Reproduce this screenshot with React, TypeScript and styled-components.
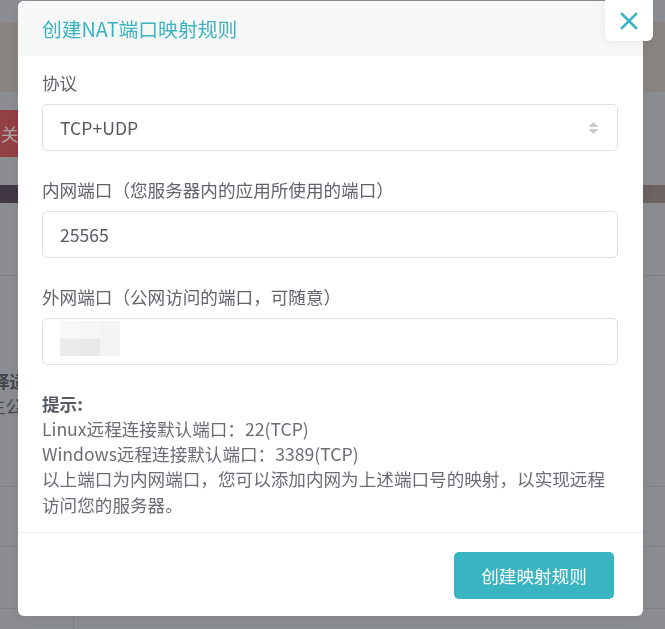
import React from "react";
import styled, { createGlobalStyle } from "styled-components";

const GlobalStyle = createGlobalStyle`
  html, body {
    margin: 0;
    padding: 0;
    overflow: hidden;
  }
  body {
    font-family: "Noto Sans CJK SC", "Noto Sans", sans-serif;
    background: #c7cbd1;
  }
  * { box-sizing: border-box; }
`;

/* ---------- page underneath the dialog ---------- */

const Page = styled.div`
  width: 665px;
  height: 629px;
  display: flex;
  flex-direction: column;
  background: #c7cbd1;
  overflow: hidden;
`;

const Band = styled.div<{ $h: number; $bg?: string }>`
  height: ${(p) => p.$h}px;
  flex: none;
  background: ${(p) => p.$bg ?? "transparent"};
`;

const ActionRow = styled.div`
  height: 47px;
  flex: none;
  display: flex;
  align-items: stretch;
`;

const PowerButton = styled.div`
  margin-left: -21px;
  padding: 0 22px;
  display: flex;
  align-items: center;
  background: #d35c61;
  color: #f6eaea;
  font-size: 17.6px;
  border-radius: 4px;
`;

const DarkBand = styled.div`
  height: 18px;
  flex: none;
  background: linear-gradient(90deg, #5e4e60 0%, #8c7a7c 60%, #9d908d 100%);
`;

const Section = styled.div<{ $h: number }>`
  height: ${(p) => p.$h}px;
  flex: none;
  border-bottom: 1px solid #b5b9bf;
`;

const Intro = styled.div`
  height: 211px;
  flex: none;
  padding-top: 92px;
  border-bottom: 1px solid #b5b9bf;
  font-size: 17.6px;
  line-height: 25px;
  white-space: nowrap;
`;

const IntroTitle = styled.div`
  margin-left: -8px;
  font-weight: 700;
  color: #5f636d;
`;

const IntroText = styled.div`
  margin-left: -12px;
  color: #646873;
`;

const BottomRow = styled.div`
  flex: 1;
  display: flex;
`;

const SideCell = styled.div`
  width: 74px;
  border-right: 1px solid #b5b9bf;
`;

const Mask = styled.div`
  position: fixed;
  inset: 0;
  background: rgba(0, 0, 0, 0.3);
`;

/* ---------- dialog ---------- */

const Dialog = styled.div`
  position: fixed;
  left: 18px;
  top: 1px;
  width: 625px;
  background: #ffffff;
  border-radius: 6px;
  box-shadow: 0 4px 18px rgba(0, 0, 0, 0.08);
  display: flex;
  flex-direction: column;
`;

const Header = styled.div`
  height: 55px;
  padding: 0 24px;
  display: flex;
  align-items: center;
  background: #f6f7f7;
  border-radius: 6px 6px 0 0;
`;

const Title = styled.h3`
  margin: 0;
  font-size: 19.8px;
  font-weight: 400;
  line-height: 26px;
  color: #3cb4c0;
`;

const CloseButton = styled.button`
  position: absolute;
  top: -8px;
  right: -10px;
  width: 48px;
  height: 48px;
  padding: 0;
  padding-top: 8px;
  border: none;
  border-radius: 6px;
  background: #ffffff;
  box-shadow: 0 2px 10px rgba(0, 0, 0, 0.06);
  display: flex;
  align-items: center;
  justify-content: center;
  cursor: pointer;
`;

const Body = styled.div`
  padding: 14px 25px 14px 24px;
  display: flex;
  flex-direction: column;
  gap: 26px;
`;

const Field = styled.div`
  display: flex;
  flex-direction: column;
  gap: 9px;
`;

const Label = styled.label`
  font-size: 17.6px;
  line-height: 25px;
  color: #62636b;
`;

const Control = styled.div`
  height: 47px;
  border: 1px solid #dcdfe3;
  border-radius: 5px;
  padding: 0 18px 0 17px;
  display: flex;
  align-items: center;
  justify-content: space-between;
  font-size: 17.6px;
  color: #575862;
  background: #ffffff;
`;

const TextInput = styled.input`
  height: 47px;
  border: 1px solid #dcdfe3;
  border-radius: 5px;
  padding: 0 17px;
  font-family: inherit;
  font-size: 17.6px;
  color: #575862;
  background: #ffffff;
  outline: none;
`;

const RedactedBox = styled.div`
  height: 47px;
  border: 1px solid #dcdfe3;
  border-radius: 5px;
  padding: 2px 17px 0;
  display: flex;
  align-items: flex-start;
`;

const Mosaic = styled.div`
  display: grid;
  grid-template-columns: 20px 20px 20px;
  grid-template-rows: 18px 17px;
  filter: blur(0.6px);
`;

const Tile = styled.span<{ $c: string; $col: string; $row: string }>`
  background: ${(p) => p.$c};
  grid-column: ${(p) => p.$col};
  grid-row: ${(p) => p.$row};
`;

const Tips = styled.div`
  font-size: 17.6px;
  line-height: 25px;
  color: #6b6c75;
`;

const TipTitle = styled.div`
  font-weight: 700;
  color: #585a65;
`;

const TipPara = styled.p`
  margin: 0;
  line-height: 26px;
`;

const Footer = styled.div`
  border-top: 1px solid #eeeeee;
  padding: 19px 29px 17px;
  display: flex;
  justify-content: flex-end;
`;

const PrimaryButton = styled.button`
  width: 160px;
  height: 47px;
  border: none;
  border-radius: 5px;
  background: #39b5c1;
  color: #ffffff;
  font-family: inherit;
  font-size: 17.6px;
  cursor: pointer;
`;

const SortArrows = () => (
  <svg width="11" height="14" viewBox="0 0 11 14" aria-hidden>
    <path d="M5.5 1 L10.5 6 L0.5 6 Z" fill="#cacaca" />
    <path d="M5.5 13 L10.5 8 L0.5 8 Z" fill="#cacaca" />
  </svg>
);

const CloseIcon = () => (
  <svg width="18" height="18" viewBox="0 0 18 18" aria-hidden>
    <path
      d="M2 2 L16 16 M16 2 L2 16"
      stroke="#3ab4c0"
      strokeWidth="2.6"
      strokeLinecap="square"
      fill="none"
    />
  </svg>
);

export default function App() {
  return (
    <>
      <GlobalStyle />
      <Page>
        <Band $h={22} />
        <Band $h={70} $bg="#c5beb8" />
        <Band $h={18} />
        <ActionRow>
          <PowerButton>关机</PowerButton>
        </ActionRow>
        <Band $h={28} />
        <DarkBand />
        <Section $h={73} />
        <Intro>
          <IntroTitle>择适</IntroTitle>
          <IntroText>主公</IntroText>
        </Intro>
        <Section $h={60} />
        <Section $h={62} />
        <BottomRow>
          <SideCell />
        </BottomRow>
      </Page>
      <Mask />
      <Dialog>
        <Header>
          <Title>创建NAT端口映射规则</Title>
        </Header>
        <CloseButton aria-label="关闭">
          <CloseIcon />
        </CloseButton>
        <Body>
          <Field>
            <Label>协议</Label>
            <Control>
              <span>TCP+UDP</span>
              <SortArrows />
            </Control>
          </Field>
          <Field>
            <Label>内网端口（您服务器内的应用所使用的端口）</Label>
            <TextInput defaultValue="25565" readOnly />
          </Field>
          <Field>
            <Label>外网端口（公网访问的端口，可随意）</Label>
            <RedactedBox>
              <Mosaic>
                <Tile $c="#f8f8f8" $col="1" $row="1" />
                <Tile $c="#f6f6f6" $col="2" $row="1" />
                <Tile $c="#f4f4f4" $col="3" $row="1 / span 2" />
                <Tile $c="#ebebeb" $col="1" $row="2" />
                <Tile $c="#e8e8e8" $col="2" $row="2" />
              </Mosaic>
            </RedactedBox>
          </Field>
          <Tips>
            <TipTitle>提示:</TipTitle>
            <div>Linux远程连接默认端口：22(TCP)</div>
            <div>Windows远程连接默认端口：3389(TCP)</div>
            <TipPara>
              以上端口为内网端口，您可以添加内网为上述端口号的映射，以实现远程访问您的服务器。
            </TipPara>
          </Tips>
        </Body>
        <Footer>
          <PrimaryButton>创建映射规则</PrimaryButton>
        </Footer>
      </Dialog>
    </>
  );
}
